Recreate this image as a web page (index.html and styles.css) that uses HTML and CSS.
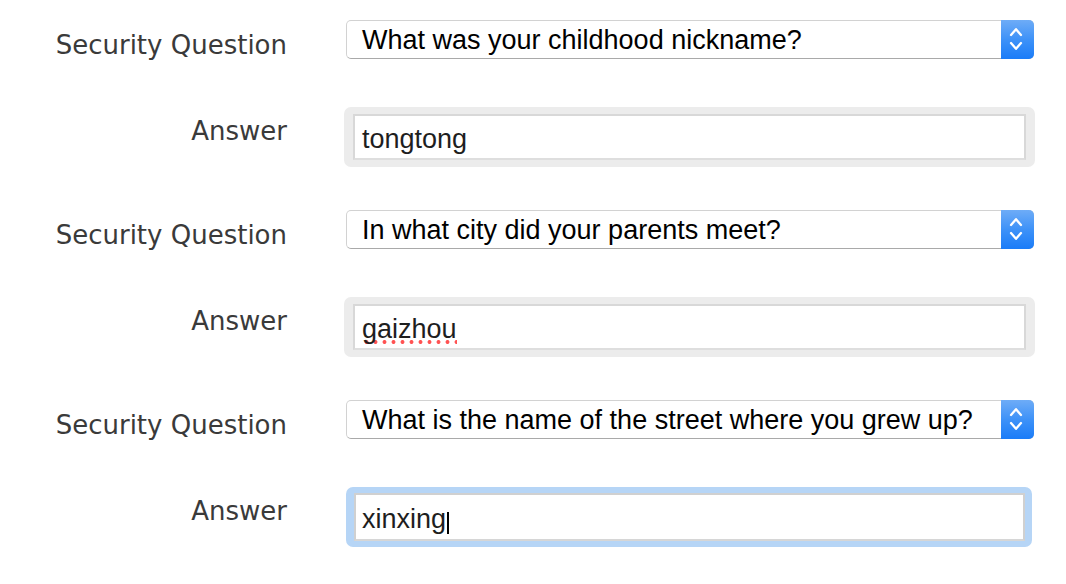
FILE: index.html
```html
<!DOCTYPE html>
<html lang="en">
<head>
<meta charset="utf-8">
<title>Security Questions</title>
<link rel="stylesheet" href="styles.css">
</head>
<body>
<div class="form">
  <div class="row q-row">
    <div class="label">Security Question</div>
    <div class="select">
      <span class="select-text">What was your childhood nickname?</span>
      <span class="stepper"><svg width="33" height="39" viewBox="0 0 33 39"><path d="M10 15 L15 9.2 L20 15 M10 23 L15 28.8 L20 23" fill="none" stroke="#fff" stroke-width="2.3" stroke-linecap="round" stroke-linejoin="round"/></svg></span>
    </div>
  </div>
  <div class="row a-row">
    <div class="label">Answer</div>
    <div class="field-wrap">
      <div class="field">tongtong</div>
    </div>
  </div>

  <div class="row q-row">
    <div class="label">Security Question</div>
    <div class="select">
      <span class="select-text">In what city did your parents meet?</span>
      <span class="stepper"><svg width="33" height="39" viewBox="0 0 33 39"><path d="M10 15 L15 9.2 L20 15 M10 23 L15 28.8 L20 23" fill="none" stroke="#fff" stroke-width="2.3" stroke-linecap="round" stroke-linejoin="round"/></svg></span>
    </div>
  </div>
  <div class="row a-row">
    <div class="label">Answer</div>
    <div class="field-wrap">
      <div class="field"><span class="misspelled">gaizhou</span></div>
    </div>
  </div>

  <div class="row q-row">
    <div class="label">Security Question</div>
    <div class="select">
      <span class="select-text">What is the name of the street where you grew up?</span>
      <span class="stepper"><svg width="33" height="39" viewBox="0 0 33 39"><path d="M10 15 L15 9.2 L20 15 M10 23 L15 28.8 L20 23" fill="none" stroke="#fff" stroke-width="2.3" stroke-linecap="round" stroke-linejoin="round"/></svg></span>
    </div>
  </div>
  <div class="row a-row">
    <div class="label">Answer</div>
    <div class="field-wrap focused">
      <div class="field">xinxing<span class="caret"></span></div>
    </div>
  </div>
</div>
</body>
</html>
```

FILE: styles.css
```css
html, body {
  margin: 0;
  padding: 0;
  background: #ffffff;
}

.form {
  display: flex;
  flex-direction: column;
  padding-top: 20px;
}

.row {
  display: flex;
  align-items: flex-start;
}

.label {
  width: 287px;
  flex: none;
  text-align: right;
  font-family: "DejaVu Sans", sans-serif;
  font-size: 26px;
  line-height: 30px;
  color: #3a3a3a;
}

.q-row {
  height: 39px;
  margin-bottom: 48px;
}

.q-row .label {
  padding-top: 10px;
}

.a-row {
  height: 60px;
  margin-bottom: 43px;
}

.a-row .label {
  padding-top: 9px;
}

.select {
  box-sizing: border-box;
  margin-left: 59px;
  width: 688px;
  height: 39px;
  display: flex;
  align-items: flex-start;
  background: #ffffff;
  border: 1px solid #d2d2d2;
  border-bottom-color: #a9a9a9;
  border-radius: 5px;
}

.select-text {
  flex: 1;
  padding-left: 15px;
  font-family: "Liberation Sans", Arial, sans-serif;
  font-size: 27px;
  line-height: 39px;
  color: #000000;
  white-space: nowrap;
}

.stepper {
  flex: none;
  width: 33px;
  height: 39px;
  margin: -1px -1px -1px 0;
  border-radius: 0 5px 5px 0;
  background: linear-gradient(to bottom, #6eacf7 0%, #3e92f8 50%, #1a7cf8 100%);
  display: block;
}

.stepper svg {
  display: block;
}

.field-wrap {
  box-sizing: border-box;
  margin-left: 57px;
  width: 691px;
  height: 60px;
  padding: 7px 9px;
  background: #ececec;
  border-radius: 7px;
}

.field-wrap.focused {
  margin-left: 59px;
  width: 686px;
  padding: 6px 7px 6px 8px;
  background: #b6d5f6;
}

.field {
  box-sizing: border-box;
  height: 100%;
  background: #ffffff;
  border: 2px solid #d8d8d8;
  border-bottom-color: #dedede;
  padding-left: 7px;
  font-family: "Liberation Sans", Arial, sans-serif;
  font-size: 27px;
  line-height: 46px;
  color: #1e1e1e;
  white-space: nowrap;
}

.focused .field {
  border-color: #d0d0d0;
  border-bottom-color: #d6d6d6;
  padding-left: 6px;
  line-height: 48px;
}

.misspelled {
  background-image: radial-gradient(circle at center, rgba(255, 64, 64, 0.9) 1.6px, rgba(255, 64, 64, 0) 2.3px);
  background-repeat: repeat-x;
  background-size: 9px 6px;
  background-position: 0 24.5px;
}

.caret {
  display: inline-block;
  width: 2px;
  height: 22px;
  margin-left: 1px;
  background: #000000;
  vertical-align: -6px;
}
```
